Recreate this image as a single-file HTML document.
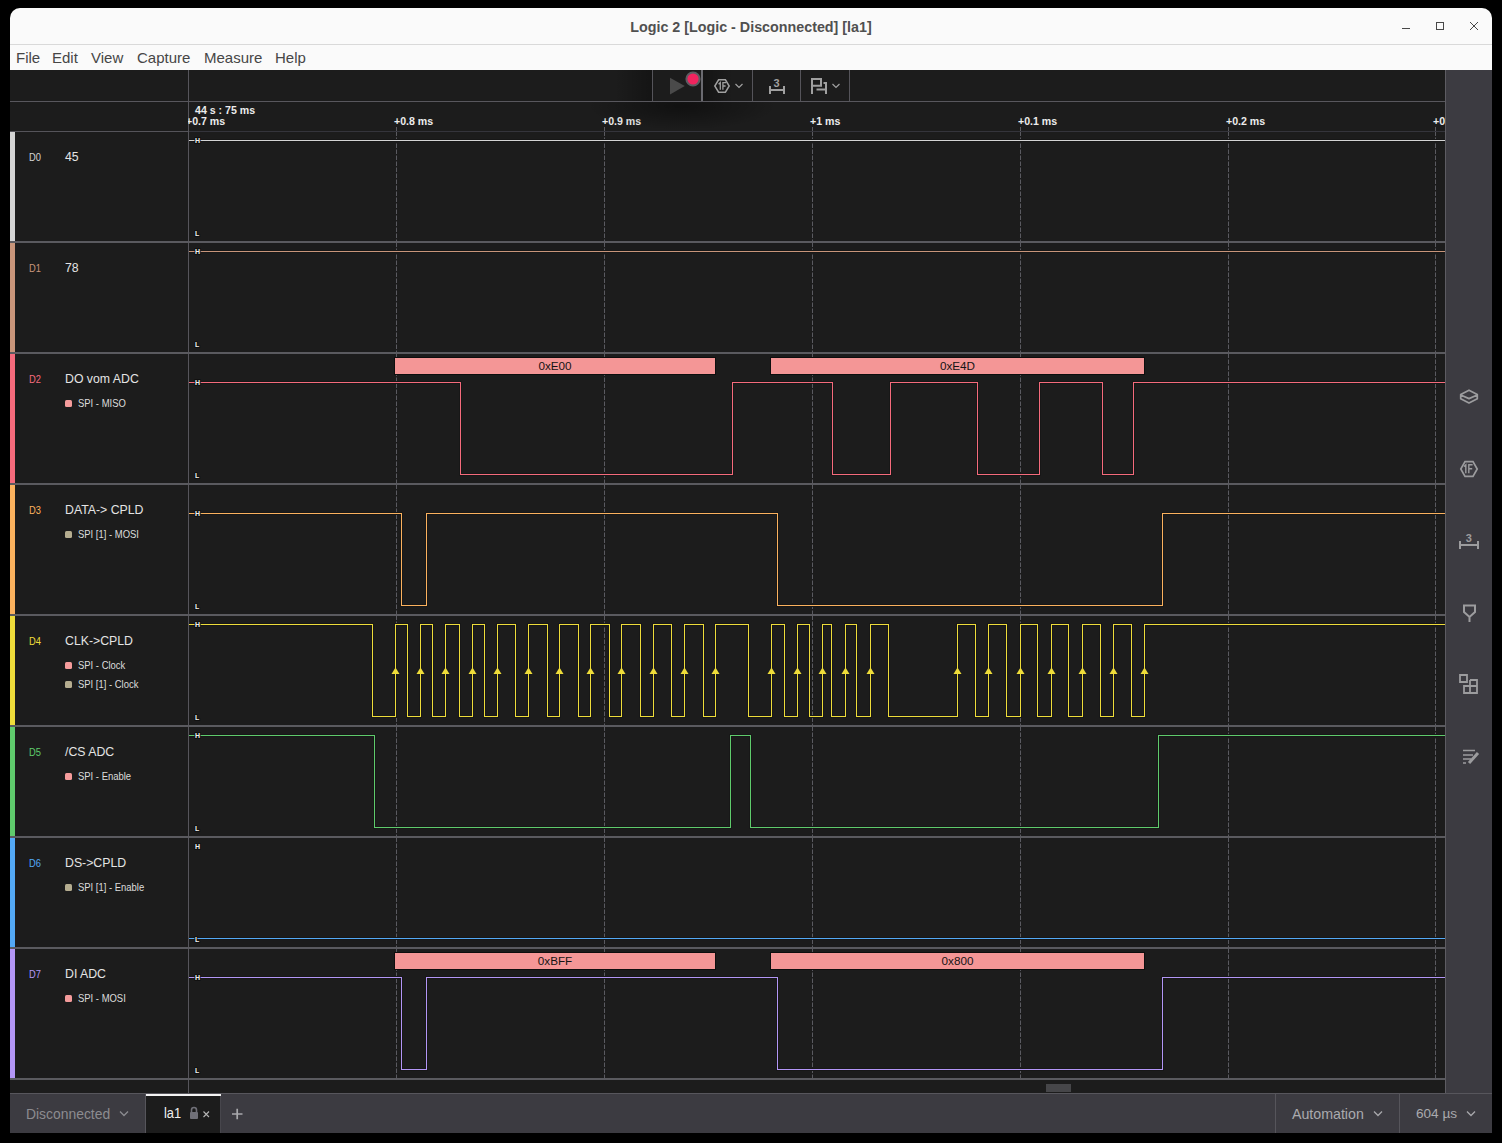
<!DOCTYPE html><html><head><meta charset="utf-8"><style>
*{margin:0;padding:0;box-sizing:border-box}
html,body{width:1502px;height:1143px;background:#000;overflow:hidden;font-family:"Liberation Sans", sans-serif}
.a{position:absolute}
.t{position:absolute;white-space:pre;line-height:1}
</style></head><body>
<div class="a" style="left:10px;top:8px;width:1482px;height:1125px;border-radius:10px 10px 0 0;overflow:hidden;background:#1c1c1c">
</div>

<div class="a" style="left:10px;top:8px;width:1482px;height:36px;background:#fafafa;border-radius:10px 10px 0 0"></div>
<div class="a" style="left:10px;top:44px;width:1482px;height:1px;background:#d9d9d9"></div>
<div class="a" style="left:10px;top:45px;width:1482px;height:25px;background:#fafafa"></div>
<div class="t" style="left:0;width:1502px;text-align:center;top:20px;font-size:14.3px;font-weight:700;color:#505050">Logic 2 [Logic - Disconnected] [la1]</div>
<svg class="a" style="left:1390px;top:15px" width="100" height="24"><g stroke="#484848" stroke-width="1" fill="none"><line x1="12" y1="13.5" x2="20" y2="13.5"/><rect x="46.5" y="7.5" width="7" height="7"/><line x1="80" y1="7" x2="88" y2="15"/><line x1="88" y1="7" x2="80" y2="15"/></g></svg>
<div class="t" style="left:16px;top:50px;font-size:15px;color:#464646">File</div>
<div class="t" style="left:52px;top:50px;font-size:15px;color:#464646">Edit</div>
<div class="t" style="left:91px;top:50px;font-size:15px;color:#464646">View</div>
<div class="t" style="left:137px;top:50px;font-size:15px;color:#464646">Capture</div>
<div class="t" style="left:204px;top:50px;font-size:15px;color:#464646">Measure</div>
<div class="t" style="left:275px;top:50px;font-size:15px;color:#464646">Help</div>
<div class="a" style="left:10px;top:101px;width:1435px;height:1px;background:#58575d"></div>
<div class="a" style="left:188px;top:131px;width:1257px;height:1px;background:#34343b"></div>
<div class="a" style="left:188px;top:70px;width:1px;height:1023px;background:#56555b"></div>
<svg class="a" style="left:0;top:0" width="1502" height="1143"><line x1="396.5" y1="127" x2="396.5" y2="131" stroke="#5a5a60"/><line x1="396.5" y1="132" x2="396.5" y2="241" stroke="#5a5a60" stroke-dasharray="4.5 1.5" stroke-dashoffset="0.5"/><line x1="396.5" y1="243" x2="396.5" y2="352" stroke="#5a5a60" stroke-dasharray="4.5 1.5" stroke-dashoffset="0.5"/><line x1="396.5" y1="354" x2="396.5" y2="483" stroke="#5a5a60" stroke-dasharray="4.5 1.5" stroke-dashoffset="0.5"/><line x1="396.5" y1="485" x2="396.5" y2="614" stroke="#5a5a60" stroke-dasharray="4.5 1.5" stroke-dashoffset="0.5"/><line x1="396.5" y1="616" x2="396.5" y2="725" stroke="#5a5a60" stroke-dasharray="4.5 1.5" stroke-dashoffset="0.5"/><line x1="396.5" y1="727" x2="396.5" y2="836" stroke="#5a5a60" stroke-dasharray="4.5 1.5" stroke-dashoffset="0.5"/><line x1="396.5" y1="838" x2="396.5" y2="947" stroke="#5a5a60" stroke-dasharray="4.5 1.5" stroke-dashoffset="0.5"/><line x1="396.5" y1="949" x2="396.5" y2="1078" stroke="#5a5a60" stroke-dasharray="4.5 1.5" stroke-dashoffset="0.5"/><line x1="604.5" y1="127" x2="604.5" y2="131" stroke="#5a5a60"/><line x1="604.5" y1="132" x2="604.5" y2="241" stroke="#5a5a60" stroke-dasharray="4.5 1.5" stroke-dashoffset="0.5"/><line x1="604.5" y1="243" x2="604.5" y2="352" stroke="#5a5a60" stroke-dasharray="4.5 1.5" stroke-dashoffset="0.5"/><line x1="604.5" y1="354" x2="604.5" y2="483" stroke="#5a5a60" stroke-dasharray="4.5 1.5" stroke-dashoffset="0.5"/><line x1="604.5" y1="485" x2="604.5" y2="614" stroke="#5a5a60" stroke-dasharray="4.5 1.5" stroke-dashoffset="0.5"/><line x1="604.5" y1="616" x2="604.5" y2="725" stroke="#5a5a60" stroke-dasharray="4.5 1.5" stroke-dashoffset="0.5"/><line x1="604.5" y1="727" x2="604.5" y2="836" stroke="#5a5a60" stroke-dasharray="4.5 1.5" stroke-dashoffset="0.5"/><line x1="604.5" y1="838" x2="604.5" y2="947" stroke="#5a5a60" stroke-dasharray="4.5 1.5" stroke-dashoffset="0.5"/><line x1="604.5" y1="949" x2="604.5" y2="1078" stroke="#5a5a60" stroke-dasharray="4.5 1.5" stroke-dashoffset="0.5"/><line x1="812.5" y1="127" x2="812.5" y2="131" stroke="#5a5a60"/><line x1="812.5" y1="132" x2="812.5" y2="241" stroke="#5a5a60" stroke-dasharray="4.5 1.5" stroke-dashoffset="0.5"/><line x1="812.5" y1="243" x2="812.5" y2="352" stroke="#5a5a60" stroke-dasharray="4.5 1.5" stroke-dashoffset="0.5"/><line x1="812.5" y1="354" x2="812.5" y2="483" stroke="#5a5a60" stroke-dasharray="4.5 1.5" stroke-dashoffset="0.5"/><line x1="812.5" y1="485" x2="812.5" y2="614" stroke="#5a5a60" stroke-dasharray="4.5 1.5" stroke-dashoffset="0.5"/><line x1="812.5" y1="616" x2="812.5" y2="725" stroke="#5a5a60" stroke-dasharray="4.5 1.5" stroke-dashoffset="0.5"/><line x1="812.5" y1="727" x2="812.5" y2="836" stroke="#5a5a60" stroke-dasharray="4.5 1.5" stroke-dashoffset="0.5"/><line x1="812.5" y1="838" x2="812.5" y2="947" stroke="#5a5a60" stroke-dasharray="4.5 1.5" stroke-dashoffset="0.5"/><line x1="812.5" y1="949" x2="812.5" y2="1078" stroke="#5a5a60" stroke-dasharray="4.5 1.5" stroke-dashoffset="0.5"/><line x1="1020.5" y1="127" x2="1020.5" y2="131" stroke="#5a5a60"/><line x1="1020.5" y1="132" x2="1020.5" y2="241" stroke="#5a5a60" stroke-dasharray="4.5 1.5" stroke-dashoffset="0.5"/><line x1="1020.5" y1="243" x2="1020.5" y2="352" stroke="#5a5a60" stroke-dasharray="4.5 1.5" stroke-dashoffset="0.5"/><line x1="1020.5" y1="354" x2="1020.5" y2="483" stroke="#5a5a60" stroke-dasharray="4.5 1.5" stroke-dashoffset="0.5"/><line x1="1020.5" y1="485" x2="1020.5" y2="614" stroke="#5a5a60" stroke-dasharray="4.5 1.5" stroke-dashoffset="0.5"/><line x1="1020.5" y1="616" x2="1020.5" y2="725" stroke="#5a5a60" stroke-dasharray="4.5 1.5" stroke-dashoffset="0.5"/><line x1="1020.5" y1="727" x2="1020.5" y2="836" stroke="#5a5a60" stroke-dasharray="4.5 1.5" stroke-dashoffset="0.5"/><line x1="1020.5" y1="838" x2="1020.5" y2="947" stroke="#5a5a60" stroke-dasharray="4.5 1.5" stroke-dashoffset="0.5"/><line x1="1020.5" y1="949" x2="1020.5" y2="1078" stroke="#5a5a60" stroke-dasharray="4.5 1.5" stroke-dashoffset="0.5"/><line x1="1228.5" y1="127" x2="1228.5" y2="131" stroke="#5a5a60"/><line x1="1228.5" y1="132" x2="1228.5" y2="241" stroke="#5a5a60" stroke-dasharray="4.5 1.5" stroke-dashoffset="0.5"/><line x1="1228.5" y1="243" x2="1228.5" y2="352" stroke="#5a5a60" stroke-dasharray="4.5 1.5" stroke-dashoffset="0.5"/><line x1="1228.5" y1="354" x2="1228.5" y2="483" stroke="#5a5a60" stroke-dasharray="4.5 1.5" stroke-dashoffset="0.5"/><line x1="1228.5" y1="485" x2="1228.5" y2="614" stroke="#5a5a60" stroke-dasharray="4.5 1.5" stroke-dashoffset="0.5"/><line x1="1228.5" y1="616" x2="1228.5" y2="725" stroke="#5a5a60" stroke-dasharray="4.5 1.5" stroke-dashoffset="0.5"/><line x1="1228.5" y1="727" x2="1228.5" y2="836" stroke="#5a5a60" stroke-dasharray="4.5 1.5" stroke-dashoffset="0.5"/><line x1="1228.5" y1="838" x2="1228.5" y2="947" stroke="#5a5a60" stroke-dasharray="4.5 1.5" stroke-dashoffset="0.5"/><line x1="1228.5" y1="949" x2="1228.5" y2="1078" stroke="#5a5a60" stroke-dasharray="4.5 1.5" stroke-dashoffset="0.5"/><line x1="1435.5" y1="127" x2="1435.5" y2="131" stroke="#5a5a60"/><line x1="1435.5" y1="132" x2="1435.5" y2="241" stroke="#5a5a60" stroke-dasharray="4.5 1.5" stroke-dashoffset="0.5"/><line x1="1435.5" y1="243" x2="1435.5" y2="352" stroke="#5a5a60" stroke-dasharray="4.5 1.5" stroke-dashoffset="0.5"/><line x1="1435.5" y1="354" x2="1435.5" y2="483" stroke="#5a5a60" stroke-dasharray="4.5 1.5" stroke-dashoffset="0.5"/><line x1="1435.5" y1="485" x2="1435.5" y2="614" stroke="#5a5a60" stroke-dasharray="4.5 1.5" stroke-dashoffset="0.5"/><line x1="1435.5" y1="616" x2="1435.5" y2="725" stroke="#5a5a60" stroke-dasharray="4.5 1.5" stroke-dashoffset="0.5"/><line x1="1435.5" y1="727" x2="1435.5" y2="836" stroke="#5a5a60" stroke-dasharray="4.5 1.5" stroke-dashoffset="0.5"/><line x1="1435.5" y1="838" x2="1435.5" y2="947" stroke="#5a5a60" stroke-dasharray="4.5 1.5" stroke-dashoffset="0.5"/><line x1="1435.5" y1="949" x2="1435.5" y2="1078" stroke="#5a5a60" stroke-dasharray="4.5 1.5" stroke-dashoffset="0.5"/><rect x="10" y="241" width="1435" height="2" fill="#5a5a5f"/><rect x="10" y="352" width="1435" height="2" fill="#5a5a5f"/><rect x="10" y="483" width="1435" height="2" fill="#5a5a5f"/><rect x="10" y="614" width="1435" height="2" fill="#5a5a5f"/><rect x="10" y="725" width="1435" height="2" fill="#5a5a5f"/><rect x="10" y="836" width="1435" height="2" fill="#5a5a5f"/><rect x="10" y="947" width="1435" height="2" fill="#5a5a5f"/><rect x="10" y="1078" width="1435" height="2" fill="#5a5a5f"/><path d="M189,140.5H1445" fill="none" stroke="#171717" stroke-width="3" stroke-linejoin="miter"/><path d="M189,140.5H1445" fill="none" stroke="#d4d4d4" stroke-width="1" shape-rendering="crispEdges"/><text x="195" y="142.5" font-family='"Liberation Sans", sans-serif' font-weight="700" font-size="7" fill="#f0f0f0" stroke="#111" stroke-width="2" paint-order="stroke">H</text><text x="195" y="235.5" font-family='"Liberation Sans", sans-serif' font-weight="700" font-size="7" fill="#f0f0f0" stroke="#111" stroke-width="2" paint-order="stroke">L</text><path d="M189,251.5H1445" fill="none" stroke="#171717" stroke-width="3" stroke-linejoin="miter"/><path d="M189,251.5H1445" fill="none" stroke="#c8957a" stroke-width="1" shape-rendering="crispEdges"/><text x="195" y="253.5" font-family='"Liberation Sans", sans-serif' font-weight="700" font-size="7" fill="#f0f0f0" stroke="#111" stroke-width="2" paint-order="stroke">H</text><text x="195" y="346.5" font-family='"Liberation Sans", sans-serif' font-weight="700" font-size="7" fill="#f0f0f0" stroke="#111" stroke-width="2" paint-order="stroke">L</text><path d="M189,382.5H460.5V474.5H732.5V382.5H832.5V474.5H890.5V382.5H977.5V474.5H1039.5V382.5H1102.5V474.5H1133.5V382.5H1445" fill="none" stroke="#171717" stroke-width="3" stroke-linejoin="miter"/><path d="M189,382.5H460.5V474.5H732.5V382.5H832.5V474.5H890.5V382.5H977.5V474.5H1039.5V382.5H1102.5V474.5H1133.5V382.5H1445" fill="none" stroke="#f56b7c" stroke-width="1" shape-rendering="crispEdges"/><text x="195" y="384.5" font-family='"Liberation Sans", sans-serif' font-weight="700" font-size="7" fill="#f0f0f0" stroke="#111" stroke-width="2" paint-order="stroke">H</text><text x="195" y="477.5" font-family='"Liberation Sans", sans-serif' font-weight="700" font-size="7" fill="#f0f0f0" stroke="#111" stroke-width="2" paint-order="stroke">L</text><path d="M189,513.5H401.5V605.5H426.5V513.5H777.5V605.5H1162.5V513.5H1445" fill="none" stroke="#171717" stroke-width="3" stroke-linejoin="miter"/><path d="M189,513.5H401.5V605.5H426.5V513.5H777.5V605.5H1162.5V513.5H1445" fill="none" stroke="#fbb25e" stroke-width="1" shape-rendering="crispEdges"/><text x="195" y="515.5" font-family='"Liberation Sans", sans-serif' font-weight="700" font-size="7" fill="#f0f0f0" stroke="#111" stroke-width="2" paint-order="stroke">H</text><text x="195" y="608.5" font-family='"Liberation Sans", sans-serif' font-weight="700" font-size="7" fill="#f0f0f0" stroke="#111" stroke-width="2" paint-order="stroke">L</text><path d="M189,624.5H372.5V716.5H395.5V624.5H407.5V716.5H420.5V624.5H432.5V716.5H445.5V624.5H459.5V716.5H472.5V624.5H484.5V716.5H497.5V624.5H515.5V716.5H528.5V624.5H547.5V716.5H559.5V624.5H578.5V716.5H590.5V624.5H609.5V716.5H621.5V624.5H640.5V716.5H653.5V624.5H671.5V716.5H684.5V624.5H703.5V716.5H715.5V624.5H748.5V716.5H771.5V624.5H784.5V716.5H797.5V624.5H809.5V716.5H822.5V624.5H831.5V716.5H845.5V624.5H856.5V716.5H870.5V624.5H888.5V716.5H957.5V624.5H975.5V716.5H988.5V624.5H1006.5V716.5H1020.5V624.5H1037.5V716.5H1051.5V624.5H1068.5V716.5H1082.5V624.5H1100.5V716.5H1113.5V624.5H1131.5V716.5H1144.5V624.5H1445" fill="none" stroke="#171717" stroke-width="3" stroke-linejoin="miter"/><path d="M189,624.5H372.5V716.5H395.5V624.5H407.5V716.5H420.5V624.5H432.5V716.5H445.5V624.5H459.5V716.5H472.5V624.5H484.5V716.5H497.5V624.5H515.5V716.5H528.5V624.5H547.5V716.5H559.5V624.5H578.5V716.5H590.5V624.5H609.5V716.5H621.5V624.5H640.5V716.5H653.5V624.5H671.5V716.5H684.5V624.5H703.5V716.5H715.5V624.5H748.5V716.5H771.5V624.5H784.5V716.5H797.5V624.5H809.5V716.5H822.5V624.5H831.5V716.5H845.5V624.5H856.5V716.5H870.5V624.5H888.5V716.5H957.5V624.5H975.5V716.5H988.5V624.5H1006.5V716.5H1020.5V624.5H1037.5V716.5H1051.5V624.5H1068.5V716.5H1082.5V624.5H1100.5V716.5H1113.5V624.5H1131.5V716.5H1144.5V624.5H1445" fill="none" stroke="#eedc3a" stroke-width="1" shape-rendering="crispEdges"/><path d="M391.5,674 L395.5,667.5 L399.5,674 Z" fill="#eedc3a"/><path d="M416.5,674 L420.5,667.5 L424.5,674 Z" fill="#eedc3a"/><path d="M441.5,674 L445.5,667.5 L449.5,674 Z" fill="#eedc3a"/><path d="M468.5,674 L472.5,667.5 L476.5,674 Z" fill="#eedc3a"/><path d="M493.5,674 L497.5,667.5 L501.5,674 Z" fill="#eedc3a"/><path d="M524.5,674 L528.5,667.5 L532.5,674 Z" fill="#eedc3a"/><path d="M555.5,674 L559.5,667.5 L563.5,674 Z" fill="#eedc3a"/><path d="M586.5,674 L590.5,667.5 L594.5,674 Z" fill="#eedc3a"/><path d="M617.5,674 L621.5,667.5 L625.5,674 Z" fill="#eedc3a"/><path d="M649.5,674 L653.5,667.5 L657.5,674 Z" fill="#eedc3a"/><path d="M680.5,674 L684.5,667.5 L688.5,674 Z" fill="#eedc3a"/><path d="M711.5,674 L715.5,667.5 L719.5,674 Z" fill="#eedc3a"/><path d="M767.5,674 L771.5,667.5 L775.5,674 Z" fill="#eedc3a"/><path d="M793.5,674 L797.5,667.5 L801.5,674 Z" fill="#eedc3a"/><path d="M818.5,674 L822.5,667.5 L826.5,674 Z" fill="#eedc3a"/><path d="M841.5,674 L845.5,667.5 L849.5,674 Z" fill="#eedc3a"/><path d="M866.5,674 L870.5,667.5 L874.5,674 Z" fill="#eedc3a"/><path d="M953.5,674 L957.5,667.5 L961.5,674 Z" fill="#eedc3a"/><path d="M984.5,674 L988.5,667.5 L992.5,674 Z" fill="#eedc3a"/><path d="M1016.5,674 L1020.5,667.5 L1024.5,674 Z" fill="#eedc3a"/><path d="M1047.5,674 L1051.5,667.5 L1055.5,674 Z" fill="#eedc3a"/><path d="M1078.5,674 L1082.5,667.5 L1086.5,674 Z" fill="#eedc3a"/><path d="M1109.5,674 L1113.5,667.5 L1117.5,674 Z" fill="#eedc3a"/><path d="M1140.5,674 L1144.5,667.5 L1148.5,674 Z" fill="#eedc3a"/><text x="195" y="626.5" font-family='"Liberation Sans", sans-serif' font-weight="700" font-size="7" fill="#f0f0f0" stroke="#111" stroke-width="2" paint-order="stroke">H</text><text x="195" y="719.5" font-family='"Liberation Sans", sans-serif' font-weight="700" font-size="7" fill="#f0f0f0" stroke="#111" stroke-width="2" paint-order="stroke">L</text><path d="M189,735.5H374.5V827.5H730.5V735.5H750.5V827.5H1158.5V735.5H1445" fill="none" stroke="#171717" stroke-width="3" stroke-linejoin="miter"/><path d="M189,735.5H374.5V827.5H730.5V735.5H750.5V827.5H1158.5V735.5H1445" fill="none" stroke="#5fcb6c" stroke-width="1" shape-rendering="crispEdges"/><text x="195" y="737.5" font-family='"Liberation Sans", sans-serif' font-weight="700" font-size="7" fill="#f0f0f0" stroke="#111" stroke-width="2" paint-order="stroke">H</text><text x="195" y="830.5" font-family='"Liberation Sans", sans-serif' font-weight="700" font-size="7" fill="#f0f0f0" stroke="#111" stroke-width="2" paint-order="stroke">L</text><path d="M189,938.5H1445" fill="none" stroke="#171717" stroke-width="3" stroke-linejoin="miter"/><path d="M189,938.5H1445" fill="none" stroke="#53a9f6" stroke-width="1" shape-rendering="crispEdges"/><text x="195" y="848.5" font-family='"Liberation Sans", sans-serif' font-weight="700" font-size="7" fill="#f0f0f0" stroke="#111" stroke-width="2" paint-order="stroke">H</text><text x="195" y="941.5" font-family='"Liberation Sans", sans-serif' font-weight="700" font-size="7" fill="#f0f0f0" stroke="#111" stroke-width="2" paint-order="stroke">L</text><path d="M189,977.5H401.5V1069.5H426.5V977.5H777.5V1069.5H1162.5V977.5H1445" fill="none" stroke="#171717" stroke-width="3" stroke-linejoin="miter"/><path d="M189,977.5H401.5V1069.5H426.5V977.5H777.5V1069.5H1162.5V977.5H1445" fill="none" stroke="#b396f6" stroke-width="1" shape-rendering="crispEdges"/><text x="195" y="979.5" font-family='"Liberation Sans", sans-serif' font-weight="700" font-size="7" fill="#f0f0f0" stroke="#111" stroke-width="2" paint-order="stroke">H</text><text x="195" y="1072.5" font-family='"Liberation Sans", sans-serif' font-weight="700" font-size="7" fill="#f0f0f0" stroke="#111" stroke-width="2" paint-order="stroke">L</text><rect x="394.5" y="357.5" width="321" height="17" fill="none" stroke="#0e0e0e" stroke-width="1"/><rect x="395" y="358" width="320" height="16" fill="#f49696"/><text x="555.0" y="370" text-anchor="middle" font-family='"Liberation Sans", sans-serif' font-size="11.7" fill="#141414">0xE00</text><rect x="770.5" y="357.5" width="374" height="17" fill="none" stroke="#0e0e0e" stroke-width="1"/><rect x="771" y="358" width="373" height="16" fill="#f49696"/><text x="957.5" y="370" text-anchor="middle" font-family='"Liberation Sans", sans-serif' font-size="11.7" fill="#141414">0xE4D</text><rect x="394.5" y="952.5" width="321" height="17" fill="none" stroke="#0e0e0e" stroke-width="1"/><rect x="395" y="953" width="320" height="16" fill="#f49696"/><text x="555.0" y="965" text-anchor="middle" font-family='"Liberation Sans", sans-serif' font-size="11.7" fill="#141414">0xBFF</text><rect x="770.5" y="952.5" width="374" height="17" fill="none" stroke="#0e0e0e" stroke-width="1"/><rect x="771" y="953" width="373" height="16" fill="#f49696"/><text x="957.5" y="965" text-anchor="middle" font-family='"Liberation Sans", sans-serif' font-size="11.7" fill="#141414">0x800</text></svg>
<div class="a" style="left:10px;top:132px;width:5px;height:109px;background:#d4d4d4"></div>
<div class="t" style="left:29px;top:152px;font-size:11px;color:#d4d4d4;transform:scaleX(0.85);transform-origin:0 0">D0</div>
<div class="t" style="left:65px;top:151px;font-size:12.3px;color:#e4e4e4">45</div>
<div class="a" style="left:10px;top:243px;width:5px;height:109px;background:#c8957a"></div>
<div class="t" style="left:29px;top:263px;font-size:11px;color:#c8957a;transform:scaleX(0.85);transform-origin:0 0">D1</div>
<div class="t" style="left:65px;top:262px;font-size:12.3px;color:#e4e4e4">78</div>
<div class="a" style="left:10px;top:354px;width:5px;height:129px;background:#f56b7c"></div>
<div class="t" style="left:29px;top:374px;font-size:11px;color:#f56b7c;transform:scaleX(0.85);transform-origin:0 0">D2</div>
<div class="t" style="left:65px;top:373px;font-size:12.3px;color:#e4e4e4">DO vom ADC</div>
<div class="a" style="left:65px;top:400px;width:7px;height:7px;border-radius:1.5px;background:#f49b9b"></div>
<div class="t" style="left:78px;top:398px;font-size:10.5px;color:#dcdcdc;transform:scaleX(0.9);transform-origin:0 0">SPI - MISO</div>
<div class="a" style="left:10px;top:485px;width:5px;height:129px;background:#fbb25e"></div>
<div class="t" style="left:29px;top:505px;font-size:11px;color:#fbb25e;transform:scaleX(0.85);transform-origin:0 0">D3</div>
<div class="t" style="left:65px;top:504px;font-size:12.3px;color:#e4e4e4">DATA-&gt; CPLD</div>
<div class="a" style="left:65px;top:531px;width:7px;height:7px;border-radius:1.5px;background:#b5ad90"></div>
<div class="t" style="left:78px;top:529px;font-size:10.5px;color:#dcdcdc;transform:scaleX(0.9);transform-origin:0 0">SPI [1] - MOSI</div>
<div class="a" style="left:10px;top:616px;width:5px;height:109px;background:#eedc3a"></div>
<div class="t" style="left:29px;top:636px;font-size:11px;color:#eedc3a;transform:scaleX(0.85);transform-origin:0 0">D4</div>
<div class="t" style="left:65px;top:635px;font-size:12.3px;color:#e4e4e4">CLK-&gt;CPLD</div>
<div class="a" style="left:65px;top:662px;width:7px;height:7px;border-radius:1.5px;background:#f49b9b"></div>
<div class="t" style="left:78px;top:660px;font-size:10.5px;color:#dcdcdc;transform:scaleX(0.9);transform-origin:0 0">SPI - Clock</div>
<div class="a" style="left:65px;top:681px;width:7px;height:7px;border-radius:1.5px;background:#b5ad90"></div>
<div class="t" style="left:78px;top:679px;font-size:10.5px;color:#dcdcdc;transform:scaleX(0.9);transform-origin:0 0">SPI [1] - Clock</div>
<div class="a" style="left:10px;top:727px;width:5px;height:109px;background:#5fcb6c"></div>
<div class="t" style="left:29px;top:747px;font-size:11px;color:#5fcb6c;transform:scaleX(0.85);transform-origin:0 0">D5</div>
<div class="t" style="left:65px;top:746px;font-size:12.3px;color:#e4e4e4">/CS ADC</div>
<div class="a" style="left:65px;top:773px;width:7px;height:7px;border-radius:1.5px;background:#f49b9b"></div>
<div class="t" style="left:78px;top:771px;font-size:10.5px;color:#dcdcdc;transform:scaleX(0.9);transform-origin:0 0">SPI - Enable</div>
<div class="a" style="left:10px;top:838px;width:5px;height:109px;background:#53a9f6"></div>
<div class="t" style="left:29px;top:858px;font-size:11px;color:#53a9f6;transform:scaleX(0.85);transform-origin:0 0">D6</div>
<div class="t" style="left:65px;top:857px;font-size:12.3px;color:#e4e4e4">DS-&gt;CPLD</div>
<div class="a" style="left:65px;top:884px;width:7px;height:7px;border-radius:1.5px;background:#b5ad90"></div>
<div class="t" style="left:78px;top:882px;font-size:10.5px;color:#dcdcdc;transform:scaleX(0.9);transform-origin:0 0">SPI [1] - Enable</div>
<div class="a" style="left:10px;top:949px;width:5px;height:129px;background:#b396f6"></div>
<div class="t" style="left:29px;top:969px;font-size:11px;color:#b396f6;transform:scaleX(0.85);transform-origin:0 0">D7</div>
<div class="t" style="left:65px;top:968px;font-size:12.3px;color:#e4e4e4">DI ADC</div>
<div class="a" style="left:65px;top:995px;width:7px;height:7px;border-radius:1.5px;background:#f49b9b"></div>
<div class="t" style="left:78px;top:993px;font-size:10.5px;color:#dcdcdc;transform:scaleX(0.9);transform-origin:0 0">SPI - MOSI</div>
<div class="t" style="left:195px;top:105px;font-size:10.6px;font-weight:700;color:#ececec">44 s : 75 ms</div>
<div class="t" style="left:186px;top:116px;font-size:10.6px;font-weight:700;color:#ececec">+0.7 ms</div>
<div class="t" style="left:394px;top:116px;font-size:10.6px;font-weight:700;color:#ececec">+0.8 ms</div>
<div class="t" style="left:602px;top:116px;font-size:10.6px;font-weight:700;color:#ececec">+0.9 ms</div>
<div class="t" style="left:810px;top:116px;font-size:10.6px;font-weight:700;color:#ececec">+1 ms</div>
<div class="t" style="left:1018px;top:116px;font-size:10.6px;font-weight:700;color:#ececec">+0.1 ms</div>
<div class="t" style="left:1226px;top:116px;font-size:10.6px;font-weight:700;color:#ececec">+0.2 ms</div>
<div class="t" style="left:1433px;top:116px;font-size:10.6px;font-weight:700;color:#ececec">+0</div>
<div class="a" style="left:10px;top:102px;width:178px;height:29px;background:#1c1c1c"></div>
<div class="a" style="left:10px;top:131px;width:178px;height:1px;background:#55545a"></div>
<div class="a" style="left:652px;top:70px;width:1px;height:31px;background:#55545a"></div>
<div class="a" style="left:701px;top:70px;width:2px;height:31px;background:#6a6a70"></div>
<div class="a" style="left:752px;top:70px;width:1px;height:31px;background:#55545a"></div>
<div class="a" style="left:800px;top:70px;width:1px;height:31px;background:#55545a"></div>
<div class="a" style="left:849px;top:70px;width:1px;height:31px;background:#55545a"></div>
<div class="a" style="left:615px;top:70px;width:37px;height:31px;background:linear-gradient(to right, rgba(0,0,0,0), rgba(0,0,0,0.28))"></div>
<div class="a" style="left:703px;top:70px;width:30px;height:31px;background:linear-gradient(to left, rgba(0,0,0,0), rgba(0,0,0,0.3))"></div>
<div class="a" style="left:560px;top:102px;width:260px;height:40px;background:radial-gradient(ellipse 95px 24px at 122px 4px, rgba(0,0,0,0.42), rgba(0,0,0,0))"></div>
<svg class="a" style="left:660px;top:70px" width="190" height="31"><path d="M10,7.8 L24.8,16 L10,24.4 Z" fill="#4a4a4a"/><circle cx="33" cy="9" r="6.6" fill="#f0245e" stroke="#5c5c62" stroke-width="2"/><g fill="none" stroke="#a0a0a0" stroke-width="1.5"><path d="M58.6,9.75 H65.4 L69.2,16 L65.4,22.25 H58.6 L54.8,16 Z"/><path d="M58.6,14.2 L60.3,12.6 V19.8 M62.9,19.8 V12.6 H66 M62.9,16 H65.6" stroke-width="1.3"/><path d="M75.5,14 L79,17.5 L82.5,14" stroke-width="1.2"/><path d="M110,16 V24 M124,16 V24 M110,20 H124" stroke-width="2"/><path d="M152,24 V9 H161 V15.7 H152 M163.5,13 H166 V24 M156.5,19.5 H166" stroke-width="2"/><path d="M172.5,14 L176,17.5 L179.5,14" stroke-width="1.2"/></g><text x="113.6" y="16.8" font-family='"Liberation Sans"' font-size="11" font-weight="700" fill="#a0a0a0">3</text></svg>
<div class="a" style="left:1445px;top:70px;width:47px;height:1023px;background:#3c3b41;border-left:1px solid #5d5c62"></div>
<svg class="a" style="left:1445px;top:370px" width="47" height="420"><g fill="none" stroke="#9c9c9e" stroke-width="1.7" stroke-linejoin="round"><path d="M24,20.2 L32.3,24.5 L32.3,28.8 L24,33 L15.7,28.8 L15.7,24.5 Z M15.7,25 L24,28.6 L32.3,25"/><path d="M20,91.7 H28 L32.2,99 L28,106.3 H20 L15.8,99 Z" stroke-linejoin="miter"/><path d="M19,96.4 L20.8,94.8 V103.2 M23.8,103.2 V94.8 H27.6 M23.8,98.8 H27.2" stroke-width="1.4" stroke-linejoin="miter"/><path d="M15,171 V179 M33,171 V179 M15,175 H33" stroke-width="2"/><path d="M19,235.5 H30 V242 L24.5,247 L19,242 Z M24.5,247 V252" stroke-width="2" stroke-linejoin="miter"/><path d="M15,305 H22 V312 H15 Z M25,310 H32 V323 H19 V316 H32 M25,310 V323" stroke-width="1.8" stroke-linejoin="miter"/><path d="M18,380.5 H30 M18,385 H28 M18,389 H26 M18,393 H21" stroke-width="1.6"/><path d="M33,383 L24,393" stroke-width="3"/></g><text x="20.8" y="171.5" font-family='"Liberation Sans"' font-size="11" font-weight="700" fill="#9c9c9e">3</text></svg>
<div class="a" style="left:1046px;top:1084px;width:25px;height:8px;background:#464649"></div>
<div class="a" style="left:10px;top:1093px;width:1482px;height:40px;background:#3c3b41;border-top:1px solid #57565c"></div>
<div class="a" style="left:145px;top:1094px;width:76px;height:39px;background:#1c1c1c;border-left:1px solid #56555b;border-right:1px solid #47464c"></div>
<div class="a" style="left:146px;top:1094px;width:75px;height:2px;background:#f4f4f4"></div>
<div class="t" style="left:26px;top:1108px;font-size:13.9px;color:#8c8c90">Disconnected</div>
<div class="t" style="left:164px;top:1106px;font-size:14px;transform:scaleX(0.92);transform-origin:0 0;color:#f0f0f0">la1</div>
<div class="t" style="left:1292px;top:1107px;font-size:14.2px;color:#aaaaae">Automation</div>
<div class="t" style="left:1416px;top:1107px;font-size:13.6px;color:#aaaaae">604 µs</div>
<div class="a" style="left:1275px;top:1094px;width:1px;height:39px;background:#56555b"></div>
<div class="a" style="left:1399px;top:1094px;width:1px;height:39px;background:#56555b"></div>
<svg class="a" style="left:0;top:1093px" width="1502" height="40"><g fill="none" stroke="#8c8c90" stroke-width="1.3"><path d="M120,18.5 L124,22.5 L128,18.5"/><path d="M1374,18.5 L1378,22.5 L1382,18.5" stroke="#a8a8ac"/><path d="M1467,18.5 L1471,22.5 L1475,18.5" stroke="#a8a8ac"/><path d="M203.5,18.5 L209,24 M209,18.5 L203.5,24" stroke="#b4b4b4" stroke-width="1.1"/><path d="M232,21 H242.5 M237.2,15.8 V26.2" stroke="#a8a8ac" stroke-width="1.7"/></g><rect x="190" y="19" width="8" height="7" rx="1" fill="#707078"/><path d="M191.5,19.5 V17 A2.5,2.5 0 0 1 196.5,17 V19.5" fill="none" stroke="#707078" stroke-width="1.6"/></svg>
</body></html>
